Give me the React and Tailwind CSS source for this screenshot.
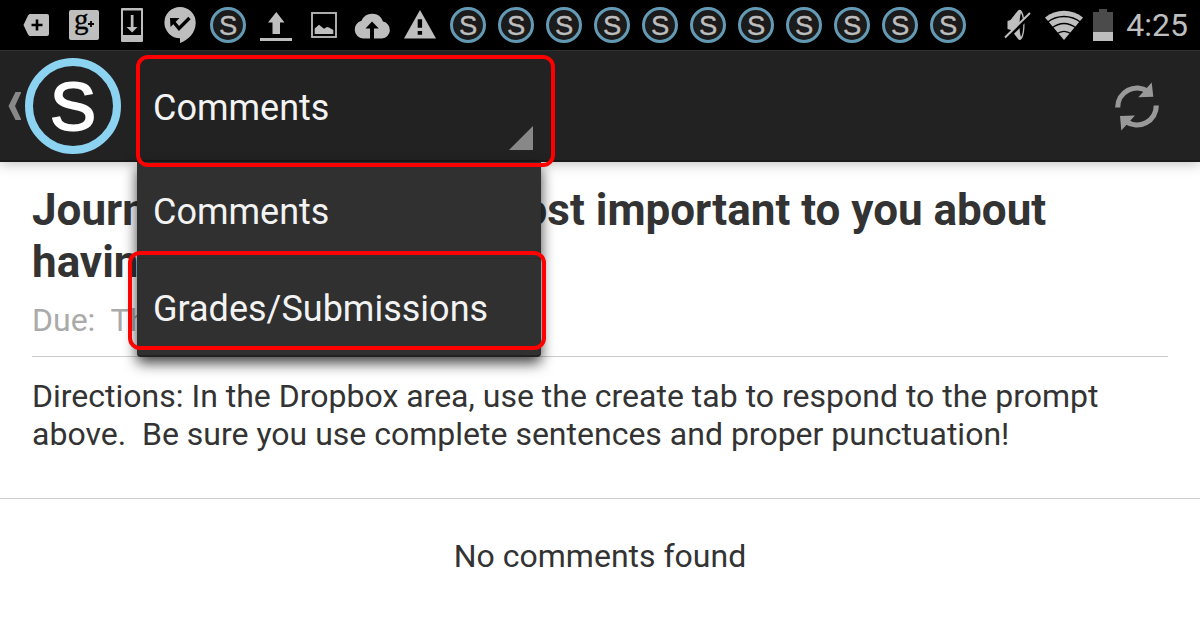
import React, { useState } from 'react';

const options = ['Comments', 'Grades/Submissions'];

function SchoologyMark({ className, ring, fill, letter, size, baseline, weight }) {
    return (
        <svg viewBox="0 0 96 96" className={className} aria-hidden="true">
            <circle cx="48" cy="48" r="44" fill={fill} stroke={ring} strokeWidth="8" />
            <text x="48" y={baseline} textAnchor="middle" fontFamily="Liberation Sans, Arial, sans-serif" fontSize={size} fill={letter} stroke={letter} strokeWidth={weight}>S</text>
        </svg>
    );
}

function StatusIcon({ children }) {
    return (
        <svg viewBox="0 0 48 50" className="h-[50px] w-12 shrink-0 fill-[#bebebe]" aria-hidden="true">
            {children}
        </svg>
    );
}

function SmallMark() {
    return (
        <span className="flex w-12 shrink-0 justify-center">
            <SchoologyMark className="size-9" ring="#639ab5" fill="#1b1b1b" letter="#bebebe" size={73} baseline={74} weight={1} />
        </span>
    );
}

function StatusBar() {
    return (
        <div className="flex h-[50px] items-center justify-between bg-black px-3">
            <div className="flex items-center">
                <StatusIcon>
                    <path d="M17.500 14H35a2 2 0 0 1 2 2v18a2 2 0 0 1-2 2H17.500L16 34.500 11.500 25 16 15.500z" />
                    <path d="M25 19.500v11M19.500 25h11" stroke="#000" strokeWidth="2.600" />
                </StatusIcon>
                <StatusIcon>
                    <rect x="9" y="10" width="30" height="30" rx="2" />
                    <text x="14" y="29" fontFamily="Liberation Serif, serif" fontSize="29" fill="#000" stroke="#000" strokeWidth="0.300">g</text>
                    <path d="M31 21v6M28 24h6" stroke="#000" strokeWidth="1.800" />
                </StatusIcon>
                <StatusIcon>
                    <path fillRule="evenodd" d="M14 8h20a1 1 0 0 1 1 1v32a1 1 0 0 1-1 1H14a1 1 0 0 1-1-1V9a1 1 0 0 1 1-1zM15 10.500V35h18V10.500z" />
                    <path d="M22.800 15h2.700v12h4L24.200 32.500 18.500 27h4.300z" />
                </StatusIcon>
                <StatusIcon>
                    <path d="M24 7a15.700 15.700 0 0 1 15.700 15.700C39.700 33 32 40 24 43v-4.800A15.600 15.600 0 0 1 24 7z" />
                    <path d="M16 20l7 8.500L33.500 18" fill="none" stroke="#000" strokeWidth="3.400" />
                    <path d="M14 18h9.500L14.500 27z" fill="#000" />
                </StatusIcon>
                <SmallMark />
                <StatusIcon>
                    <path d="M24.300 12L32.500 22.500H28V34h-7.500V22.500H16zM8 38h32v3H8z" />
                </StatusIcon>
                <StatusIcon>
                    <rect x="12" y="13" width="24" height="24" fill="none" stroke="#bebebe" strokeWidth="1.800" />
                    <path d="M14.700 34v-5.500l4.300-3.700 5 4 3-1.800 2 .5 4.300 2.500v4z" />
                </StatusIcon>
                <StatusIcon>
                    <path fillRule="evenodd" d="M15 38.500a9 9 0 0 1-1.500-17.700A11.500 11.500 0 0 1 35 21.500a8.600 8.600 0 0 1-1 17h-8V28.500h4.800L24 21.500l-6.500 7H22v10z" />
                </StatusIcon>
                <StatusIcon>
                    <path d="M24 10l16 28.500H8z" />
                    <path d="M21.700 19.200h4.400v8.500h-4.400zM21.700 31h4.400v3.800h-4.400z" fill="#000" />
                </StatusIcon>
                {Array.from({ length: 11 }, (_, i) => <SmallMark key={i} />)}
            </div>
            <div className="flex items-center">
                <svg viewBox="0 0 28 34" className="h-[34px] w-7 fill-[#bebebe]" aria-hidden="true">
                    <path d="M3.500 13l3-1L14 2.500c4-3 6.500 5 6.500 14.500S18 34 14.500 31.500L7 22l-3.500-1z" />
                    <path d="M17 5c3 5 3 19 0 24-2-5-2-19 0-24z" fill="#000" />
                    <path d="M3 30.500L28 6" stroke="#000" strokeWidth="3" />
                    <path d="M1 29.500L26 5" stroke="#bebebe" strokeWidth="2" />
                </svg>
                <svg viewBox="0 0 40 32" className="ml-3 h-8 w-10" fill="none" aria-hidden="true">
                    <path d="M1 8.500C12-.5 28-.5 39 8.500L20 31z" fill="#bebebe" />
                    <path d="M3 13.500c10-8 24-8 34 0M7.500 19.200c8-6 17-6 25 0M12.500 25c5-3.600 10-3.600 15 0" stroke="#000" strokeWidth="1.300" />
                </svg>
                <svg viewBox="0 0 22 32" className="ml-2 h-8 w-[22px]" aria-hidden="true">
                    <path d="M7 0h8v3h6v20H1V3h6z" fill="#4b4b4b" />
                    <path d="M1 23h20v9H1z" fill="#bebebe" />
                </svg>
                <span className="ml-3 text-[32px] leading-[38px] text-[#bebebe]">4:25</span>
            </div>
        </div>
    );
}

function Highlight({ className }) {
    return <span className={`pointer-events-none absolute border-4 border-[#ff0000] ${className}`} />;
}

function ViewSwitcher() {
    const [open, setOpen] = useState(true);
    const [view, setView] = useState('Comments');

    const pick = (option) => {
        setView(option);
        setOpen(false);
    };

    return (
        <div className="relative z-20 ml-4 w-[404px]">
            <button
                type="button"
                aria-haspopup="listbox"
                aria-expanded={open}
                className="flex h-28 w-full items-center justify-between pl-4 pr-2 pt-1 text-left text-4xl text-[#f3f3f3]"
                onClick={() => setOpen(o => !o)}
            >
                {view}
                <svg viewBox="0 0 24 24" className="mb-3 size-6 self-end fill-[#888888]" aria-hidden="true">
                    <path d="M24 0v24H0z" />
                </svg>
            </button>

            {/* Open menu */}
            {open && (
                <ul role="listbox" aria-label="View" className="absolute inset-x-0 top-full rounded-b-sm border-b-2 border-[#212121] bg-[#303030] shadow-[0_6px_14px_rgba(0,0,0,0.75)]">
                    {options.map((option) => (
                        <li key={option} role="option" aria-selected={option === view} className="border-b border-[#292929] last:border-b-0">
                            <button
                                type="button"
                                className="flex h-24 w-full items-center px-4 pt-1 text-left text-4xl text-[#f3f3f3]"
                                onClick={() => pick(option)}
                            >
                                {option}
                            </button>
                        </li>
                    ))}
                </ul>
            )}

            <Highlight className="-left-px -right-[14px] top-[5px] -bottom-[5px] rounded-xl" />
            {open && <Highlight className="-left-[9px] -right-[5px] top-[201px] h-[99px] rounded-xl" />}
        </div>
    );
}

export default function App() {
    return (
        <div className="bg-white font-[Roboto,sans-serif] text-[#333333]">
            <StatusBar />

            {/* Action bar */}
            <header className="relative flex h-28 items-center border-b-2 border-t border-b-[#1a1a1a] border-t-[#303030] bg-[#222222] pl-2 shadow-[0_2px_12px_rgba(0,0,0,0.25)]">
                <a href="#back" aria-label="Back" className="flex items-center gap-1">
                    <svg viewBox="0 0 13 28" className="h-7 w-[13px] fill-[#888888]" aria-hidden="true">
                        <path d="M7.500 0H13.500L7 14l6.500 14h-6L0.500 14z" />
                    </svg>
                    <SchoologyMark className="size-24" ring="#8cd3f2" fill="#222222" letter="#ffffff" size={69} baseline={72} weight={2} />
                </a>
                <ViewSwitcher />
                <button type="button" aria-label="Refresh" className="ml-auto mr-10">
                    <svg viewBox="0 0 46 50" className="h-[50px] w-[46px]" aria-hidden="true">
                        <path d="M3.700 26.500A19.300 19.300 0 0 1 34 10.500" fill="none" stroke="#999999" strokeWidth="5.200" />
                        <path d="M42.300 24.500A19.300 19.300 0 0 1 12 40.500" fill="none" stroke="#999999" strokeWidth="5.200" />
                        <path d="M37.700 1.500l1.600 14.200-15 .6zM7.300 49.500L6 35l15-.5z" fill="#999999" />
                    </svg>
                </button>
            </header>

            <main>
                <section className="border-b border-[#cccccc] px-8 pb-[45px] pt-[22px]">
                    <h1 className="text-[44px] font-bold leading-[52px]">
                        Journal 1:&nbsp; What is the most important to you about having a job?
                    </h1>
                    <p className="mt-[13px] text-[32px] leading-[38px] text-[#aaaaaa]">Due:&nbsp; Thursday</p>
                    <hr className="mb-5 mt-[17px] border-[#cccccc]" />
                    <p className="text-[32px] leading-[38px]">
                        Directions: In the Dropbox area, use the create tab to respond to the prompt above.&nbsp; Be sure you use complete sentences and proper punctuation!
                    </p>
                </section>
                <p className="py-[38px] text-center text-[32px] leading-[38px]">No comments found</p>
            </main>
        </div>
    );
}
